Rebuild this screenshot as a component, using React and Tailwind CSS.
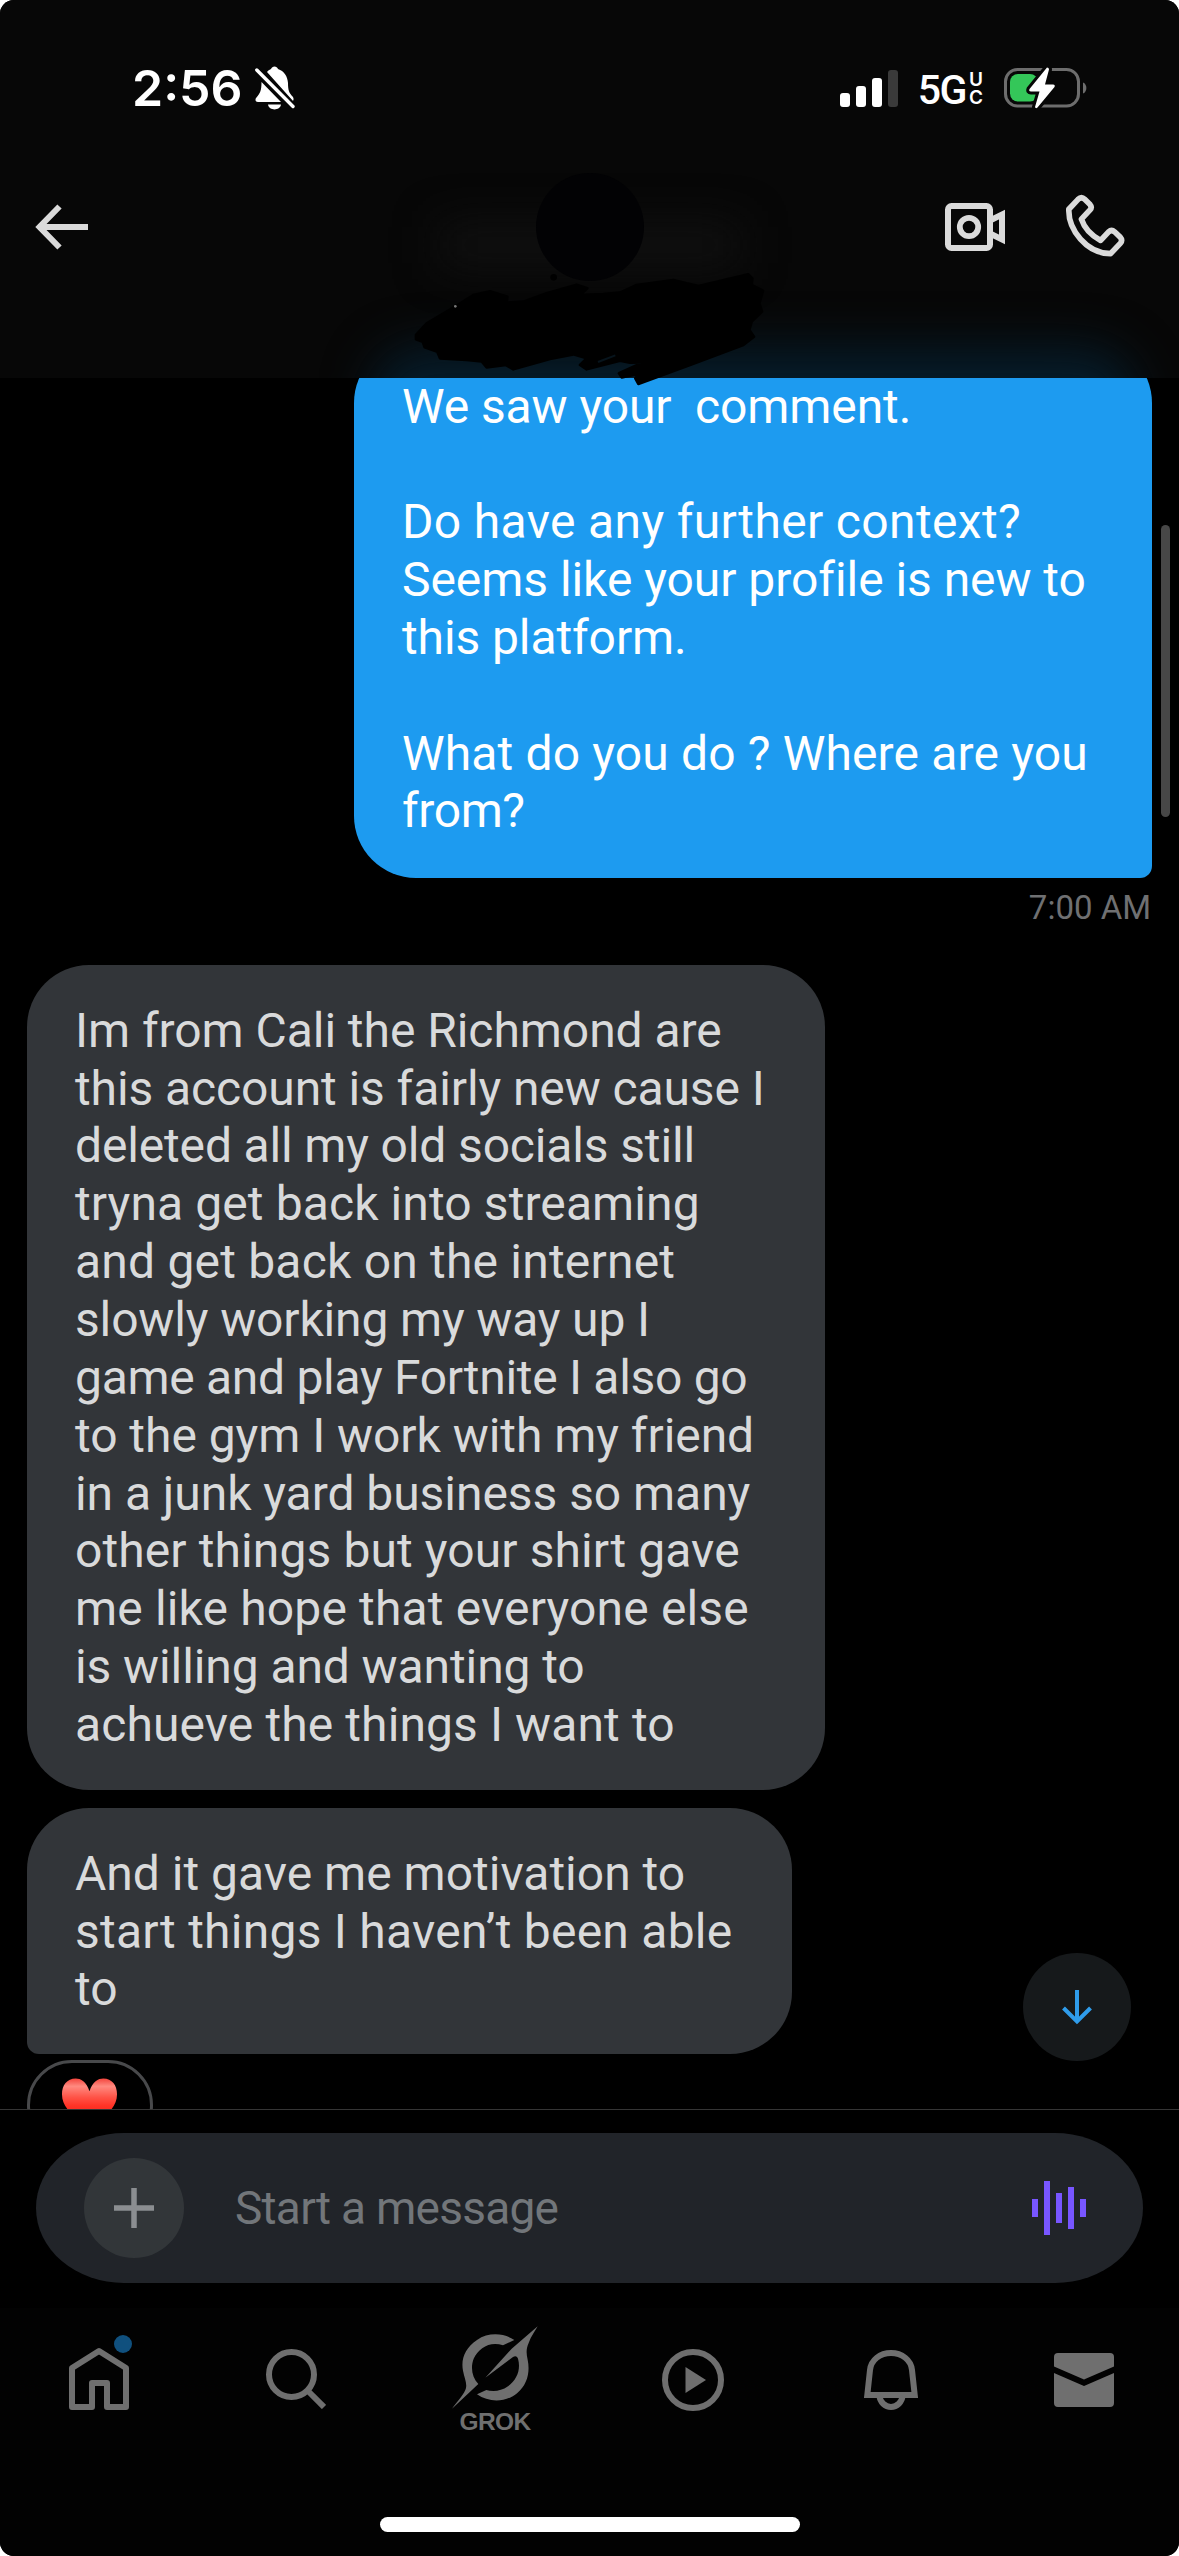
// each line is [text, tracking]
const outgoing = [
  ["We saw your  comment.", "tracking-[-0.1px]"],
  ["", ""],
  ["Do have any further context?", "tracking-[0.35px]"],
  ["Seems like your profile is new to", "tracking-[-0.05px]"],
  ["this platform.", "tracking-[-0.1px]"],
  ["", ""],
  ["What do you do ? Where are you", "tracking-[0.15px]"],
  ["from?", "tracking-[-0.4px]"],
];

const firstReply = [
  ["Im from Cali the Richmond are", "tracking-[-0.05px]"],
  ["this account is fairly new cause I", "tracking-[-0.1px]"],
  ["deleted all my old socials still", "tracking-[-0.15px]"],
  ["tryna get back into streaming", "tracking-[0.1px]"],
  ["and get back on the internet", "tracking-[0.2px]"],
  ["slowly working my way up I", "tracking-[-0.15px]"],
  ["game and play Fortnite I also go", "tracking-[-0.3px]"],
  ["to the gym I work with my friend", "tracking-[-0.05px]"],
  ["in a junk yard business so many", "tracking-[-0.05px]"],
  ["other things but your shirt gave", "tracking-[0.1px]"],
  ["me like hope that everyone else", "tracking-[0.15px]"],
  ["is willing and wanting to", "tracking-[-0.1px]"],
  ["achueve the things I want to", "tracking-[0.1px]"],
];

const secondReply = [
  ["And it gave me motivation to", "tracking-[0px]"],
  ["start things I haven’t been able", "tracking-[0.25px]"],
  ["to", "tracking-[0px]"],
];

function StatusBar() {
  return (
    <div className="flex h-[176px] items-center justify-between pr-[92px] pl-[132px] text-white">
      <div className="flex items-center gap-[12px]">
        <span className="font-[Inter,sans-serif] text-[50px] leading-none font-semibold">2:56</span>
        {/* silent mode */}
        <svg className="h-[44px] w-[40px]" viewBox="0 0 40 44" fill="currentColor">
          <path d="M12 6 C13.500 4 15 3.500 16 3 C17 -0.500 22 -0.500 23 3 C29 5 32.500 10 33 17 C33 24 34 27 38 31 C39 33 38.500 34 38 35 Z" />
          <path d="M6.500 16 L26 36 H3 C0 36 0 33 1.500 31.500 C5 27 6.500 25 6.500 16 Z" />
          <path d="M13 38.500 H26 C25 45 14 45 13 38.500 Z" />
          <path d="M1.500 3.500 L38 40.500" stroke="#070707" strokeWidth="7" />
          <path d="M1.800 4 L38 40.500" stroke="currentColor" strokeWidth="3.400" strokeLinecap="round" />
        </svg>
      </div>

      <div className="flex items-center">
        <div className="flex h-[37px] items-end gap-[6px]">
          <div className="h-[14px] w-[10px] rounded-[3px] bg-white" />
          <div className="h-[21px] w-[10px] rounded-[3px] bg-white" />
          <div className="h-[29px] w-[10px] rounded-[3px] bg-white" />
          <div className="h-[37px] w-[10px] rounded-[3px] bg-[#3a3a3a]" />
        </div>
        <span className="mt-[4px] ml-[20px] font-[Roboto,sans-serif] text-[41px] leading-none font-medium tracking-[-1.5px]">5G</span>
        <div className="mt-[1px] ml-[3px] flex w-[16px] flex-col gap-[1px] font-[Inter,sans-serif] text-[19px] leading-[17px] font-semibold">
          <span>U</span>
          <span>C</span>
        </div>
        {/* battery, charging */}
        <svg className="ml-[19px] h-[42px] w-[83px]" viewBox="0 0 83 42">
          <rect x="1.500" y="2.500" width="73" height="36.500" rx="12" fill="none" stroke="#6d6d6d" strokeWidth="3" />
          <path d="M79 15.500 C83.500 17 83.500 25 79 26.500 Z" fill="#6d6d6d" />
          <rect x="6" y="7" width="28" height="27.500" rx="8" fill="#34c759" />
          <path d="M43 0.500 L25.500 22 Q24.500 24.500 27 24.500 L35.500 24.500 L31 40 Q31.500 42 33.500 40.500 L50.500 20 Q51.500 17.500 49 17.500 L41 17.500 L45 2.500 Q45 0.500 43 0.500 Z" fill="#fff" stroke="#070707" strokeWidth="6" paintOrder="stroke" />
        </svg>
      </div>
    </div>
  );
}

function Header() {
  return (
    <header className="relative z-10 h-[378px] shrink-0 bg-[#070707]">
      {/* glow of the content behind the bar */}
      <div className="absolute inset-0 overflow-hidden">
        <div className="absolute top-[225px] left-[440px] h-[40px] w-[300px] bg-[#111111] blur-[22px]" />
        <div className="absolute top-[348px] right-[44px] left-[372px] h-[120px] rounded-[50px] bg-[#061c2a] blur-[24px]" />
      </div>
      <div className="relative">
        <StatusBar />
        <div className="flex h-[102px] items-center pr-[54px] pl-[35px] text-[#dadada]">
          <svg className="h-[46px] w-[53px]" viewBox="0 0 53 46" fill="none" stroke="currentColor" strokeWidth="6">
            <path d="M4 23 H53 M24.500 2.500 L4.500 23 L24.500 43.500" />
          </svg>
          <div className="ml-[448px] size-[108px] rounded-full bg-[#020204]" />
          <div className="ml-auto flex items-center gap-[60px]">
            <svg className="h-[48px] w-[60px]" viewBox="0 0 60 48" fill="none" stroke="currentColor" strokeWidth="6">
              <rect x="3" y="3" width="42" height="42" rx="3.500" />
              <circle cx="24" cy="24" r="9.200" strokeWidth="5.800" />
              <path d="M45 17.500 L57 11.500 V36.500 L45 30.500" />
            </svg>
            <svg className="-mt-[3px] h-[63px] w-[60px]" viewBox="75 42 180 190" fill="none" stroke="currentColor" strokeWidth="17" strokeLinejoin="round">
              <path d="M86 88 L114 58 Q124 48 134 58 L150 74 Q157 82 150 90 L124 118 C133 145 155 168 182 182 L206 156 Q215 148 224 156 L241 172 Q249 181 242 190 L212 222 C140 222 84 150 86 88 Z" />
            </svg>
          </div>
        </div>
      </div>
      {/* scribbled-out name */}
      <svg className="absolute top-[160px] left-[390px] h-[230px] w-[400px]" viewBox="0 0 1200 690">
        <path
          d="M78 525 L110 490 L195 440 L250 405 L300 394 L352 410 L350 428 L400 425 L470 400 L560 374 L592 385 L570 405 L640 402 L690 398 L740 375 L850 360 L890 370 L926 378 L1075 343 L1087 355 L1085 375 L1119 392 L1108 430 L1116 455 L1085 485 L1078 510 L1092 530 L1060 555 L900 615 L745 672 L736 655 L745 642 L695 652 L687 640 L760 607 L720 608 L690 602 L590 628 L570 615 L590 595 L550 583 L480 597 L370 628 L348 615 L290 622 L275 604 L230 600 L150 595 L142 575 L104 562 L98 545 L78 538 Z"
          fill="#000"
          stroke="#000"
          strokeWidth="8"
          strokeLinejoin="round"
        />
        <path d="M624 606 L676 586" stroke="#07141c" strokeWidth="6" />
        <circle cx="491" cy="352" r="10" fill="#000" />
        <circle cx="196" cy="439" r="4" fill="#777" />
      </svg>
    </header>
  );
}

function Bubble({ lines, className }) {
  return (
    <div className={`px-[48px] pt-[36.5px] text-[48px] leading-[57.85px] ${className}`}>
      {lines.map(([text, tracking], i) => (
        <p key={i} className={`h-[57.85px] whitespace-pre ${tracking}`}>
          {text}
        </p>
      ))}
    </div>
  );
}

function Conversation() {
  return (
    <main className="relative h-[1731px] shrink-0 overflow-hidden bg-black">
      <div className="-mt-[37px] flex flex-col">
        <Bubble
          lines={outgoing}
          className="mr-[27px] w-[798px] self-end rounded-[62px] rounded-br-[12px] bg-[#1d9bf0] pb-[38px] text-white"
        />
        <span className="mt-[10px] mr-[28px] mb-[37px] self-end text-[33px] leading-[40px] text-[#6f7072]">7:00 AM</span>
        <Bubble lines={firstReply} className="ml-[27px] h-[825px] w-[798px] rounded-[62px] bg-[#323539] text-[#d9dadb]" />
        <Bubble
          lines={secondReply}
          className="mt-[18px] ml-[27px] h-[246px] w-[765px] rounded-[62px] rounded-bl-[12px] bg-[#323539] text-[#d9dadb]"
        />
        <div className="mt-[6px] ml-[27px] flex h-[90px] w-[126px] justify-center rounded-full border-[3px] border-[#48494b] pt-[14px] pr-[2px]">
          <svg className="h-[52px] w-[57px]" viewBox="0 0 58 52">
            <defs>
              <linearGradient id="heart" x1="0" y1="0" x2="0" y2="1">
                <stop offset="0" stopColor="#f4443c" />
                <stop offset="0.16" stopColor="#ff8a80" />
                <stop offset="0.38" stopColor="#ff5448" />
                <stop offset="0.55" stopColor="#ff3427" />
                <stop offset="1" stopColor="#e8150c" />
              </linearGradient>
            </defs>
            <path d="M29 14 C26 4 20 1 15 1 C6 1 1 8 1 17 C1 33 17 42 29 51 C41 42 57 33 57 17 C57 8 52 1 43 1 C38 1 32 4 29 14 Z" fill="url(#heart)" />
          </svg>
        </div>
      </div>

      {/* scroll indicator */}
      <div className="absolute top-[147px] right-[9px] h-[292px] w-[9px] rounded-full bg-[#474747]" />

      <button className="absolute right-[48px] bottom-[48px] flex size-[108px] items-center justify-center rounded-full bg-[#16191b]">
        <svg className="h-[36px] w-[32px]" viewBox="0 0 32 36" fill="none" stroke="#2f9ceb" strokeWidth="4">
          <path d="M16 1 V33 M2.500 19 L16 32.500 L29.500 19" />
        </svg>
      </button>
    </main>
  );
}

function Composer() {
  return (
    <div className="h-[199px] shrink-0 border-t border-[#353535] bg-black px-[36px] pt-[23px]">
      <div className="flex h-[150px] items-center rounded-[88px/75px] bg-[#212429] pr-[57px] pl-[48px]">
        <div className="flex size-[100px] items-center justify-center rounded-full bg-[#323639]">
          <svg className="size-[40px]" viewBox="0 0 40 40" stroke="#8b8e91" strokeWidth="5.500">
            <path d="M20 0 V40 M0 20 H40" />
          </svg>
        </div>
        <span className="ml-[51px] flex-1 text-[46px] tracking-[-0.75px] text-[#72767a]">Start a message</span>
        <svg className="h-[54px] w-[54px]" viewBox="0 0 54 54" fill="#7856ff">
          <rect x="0" y="18" width="6" height="18" />
          <rect x="12" y="0" width="6" height="54" />
          <rect x="24" y="12" width="6" height="30" />
          <rect x="36" y="6" width="6" height="42" />
          <rect x="48" y="18" width="6" height="18" />
        </svg>
      </div>
    </div>
  );
}

function TabBar() {
  return (
    <nav className="relative flex h-[248px] shrink-0 items-start bg-[#020202] text-[#6f6f6f]">
      <div className="flex w-[198px] justify-center">
        <div className="relative mt-[39px]">
          <svg className="h-[63px] w-[60px]" viewBox="0 0 60 63" fill="none" stroke="currentColor" strokeWidth="6" strokeLinejoin="round">
            <path d="M3 21 L30 4 L57 21 V60 H38 V36 H23 V60 H3 Z" />
          </svg>
          <div className="absolute -top-[12px] -right-[3px] size-[18px] rounded-full bg-[#10507e]" />
        </div>
      </div>
      <div className="flex w-[198px] justify-center pr-[2px]">
        <svg className="mt-[41px] size-[60px]" viewBox="0 0 60 60" fill="none" stroke="currentColor" strokeWidth="6">
          <circle cx="25.500" cy="25.500" r="22.500" />
          <path d="M42 42 L58 58" />
        </svg>
      </div>
      <div className="flex w-[198px] flex-col items-center">
        <svg className="mt-[18px] h-[83px] w-[86px]" viewBox="35 34 258 249" fill="currentColor">
          <path d="M222 76 C190 55 145 52 110 76 C75 100 61 132 68 168 C72 190 80 203 77 220 C74 235 50 262 35 282 L114 208 C95 188 90 158 100 132 C114 100 150 78 188 92 Z" />
          <path d="M292 35 L214 102 L135 189 L218 127 C226 122 231 126 233 132 C242 165 230 195 203 215 C182 230 158 232 138 226 L110 239 C145 264 195 265 231 235 C260 210 270 175 262 135 C257 115 258 100 265 85 C272 65 285 48 292 35 Z" />
        </svg>
        <span className="font-['Liberation_Sans',sans-serif] text-[24.5px] leading-[25px] font-bold tracking-[-0.6px]">GROK</span>
      </div>
      <div className="flex w-[198px] justify-center">
        <svg className="mt-[41px] size-[62px]" viewBox="0 0 62 62" fill="none" stroke="currentColor" strokeWidth="6">
          <circle cx="31" cy="31" r="28" />
          <path d="M23.500 18 L44 31 L23.500 44 Z" fill="currentColor" stroke="none" />
        </svg>
      </div>
      <div className="flex w-[198px] justify-center">
        <svg className="mt-[42px] h-[60px] w-[54px]" viewBox="0 0 54 60" fill="none" stroke="currentColor" strokeWidth="6">
          <path d="M3.300 45 L6 20 C7 10 16 3 27 3 C38 3 47 10 48 20 L50.700 45 Z" />
          <path d="M15.500 46 C16 52 21 57 27 57 C33 57 38 52 38.500 46" />
        </svg>
      </div>
      <div className="flex w-[189px] justify-center pr-[2px]">
        <svg className="mt-[45px] h-[54px] w-[60px]" viewBox="0 0 60 54" fill="currentColor">
          <path d="M4 0 H56 Q60 0 60 4 V13.500 L30 26.500 L0 13.500 V4 Q0 0 4 0 Z" />
          <path d="M0 20 L30 33 L60 20 V50 Q60 54 56 54 H4 Q0 54 0 50 Z" />
        </svg>
      </div>
      {/* home indicator */}
      <div className="absolute bottom-[24px] left-[380px] h-[15px] w-[420px] rounded-full bg-white" />
    </nav>
  );
}

export default function App() {
  return (
    <div className="bg-white">
      <div className="flex h-[2556px] w-[1179px] flex-col overflow-hidden rounded-[14px] bg-black font-[Roboto,sans-serif]">
        <Header />
        <Conversation />
        <Composer />
        <TabBar />
      </div>
    </div>
  );
}
